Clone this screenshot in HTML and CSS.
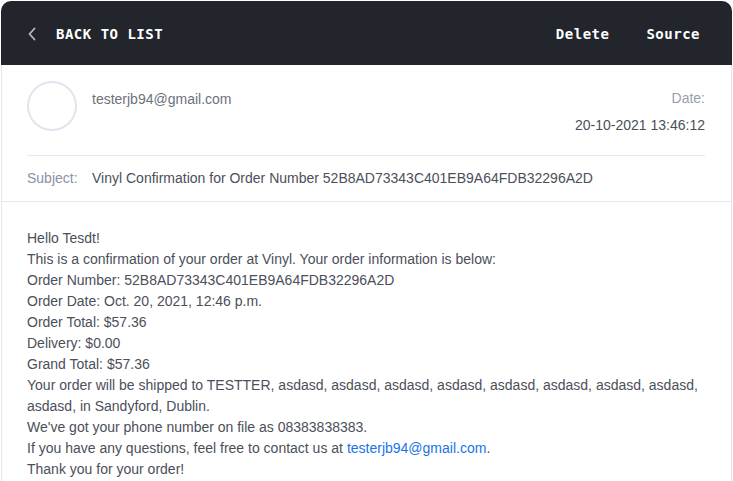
FILE: index.html
```html
<!DOCTYPE html>
<html>
<head>
<meta charset="utf-8">
<link rel="stylesheet" href="styles.css">
</head>
<body>
<div class="card">
  <header class="topbar">
    <a class="back">
      <svg class="chev" width="8" height="14" viewBox="0 0 8 14"><path d="M6.5 1.5 L1.5 7 L6.5 12.5" fill="none" stroke="#b8bcc6" stroke-width="1.8" stroke-linecap="round" stroke-linejoin="round"/></svg>
      <span>BACK TO LIST</span>
    </a>
    <nav class="actions">
      <a>Delete</a>
      <a>Source</a>
    </nav>
  </header>
  <section class="meta">
    <div class="from-row">
      <div class="avatar"></div>
      <div class="from">testerjb94@gmail.com</div>
      <div class="date">
        <div class="date-label">Date:</div>
        <div class="date-value">20-10-2021 13:46:12</div>
      </div>
    </div>
    <div class="subject-row">
      <span class="subject-label">Subject:</span>
      <span class="subject-value">Vinyl Confirmation for Order Number 52B8AD73343C401EB9A64FDB32296A2D</span>
    </div>
  </section>
  <section class="body">
    <p>Hello Tesdt!<br>
    This is a confirmation of your order at Vinyl. Your order information is below:<br>
    Order Number: 52B8AD73343C401EB9A64FDB32296A2D<br>
    Order Date: Oct. 20, 2021, 12:46 p.m.<br>
    Order Total: $57.36<br>
    Delivery: $0.00<br>
    Grand Total: $57.36<br>
    Your order will be shipped to TESTTER, asdasd, asdasd, asdasd, asdasd, asdasd, asdasd, asdasd, asdasd, asdasd, in Sandyford, Dublin.<br>
    We've got your phone number on file as 08383838383.<br>
    If you have any questions, feel free to contact us at <a class="link">testerjb94@gmail.com</a>.<br>
    Thank you for your order!</p>
  </section>
</div>
</body>
</html>
```
FILE: styles.css
```css
html, body {
  margin: 0;
  padding: 0;
  background: #ffffff;
}
body {
  padding: 1px 1px 0 1px;
  font-family: "Liberation Sans", Arial, sans-serif;
  font-size: 14px;
  color: #4b4f5a;
}
.card {
  width: 729px;
  border-left: 1px solid #e6e6f0;
  border-right: 1px solid #e6e6f0;
  border-radius: 10px 10px 0 0;
  min-height: 480px;
}
.topbar {
  height: 64px;
  margin: 0 -1px;
  background: #22252c;
  border-radius: 10px 10px 0 0;
  display: flex;
  align-items: center;
  justify-content: space-between;
  padding: 0 32px 0 27px;
  font-family: "DejaVu Sans Mono", monospace;
  font-weight: bold;
  font-size: 14px;
  letter-spacing: 0.5px;
  color: #ffffff;
}
.back {
  display: flex;
  align-items: center;
  gap: 20px;
  padding-top: 1px;
}
.chev {
  display: block;
}
.actions {
  display: flex;
  gap: 37px;
  padding-top: 1px;
}
.meta {
  padding: 16px 26px 0 25px;
  border-bottom: 1px solid #e8e8ee;
}
.from-row {
  display: flex;
  align-items: flex-start;
  padding-bottom: 19px;
  border-bottom: 1px solid #e8e8ee;
}
.avatar {
  width: 46px;
  height: 46px;
  border: 2px solid #e4e4ee;
  border-radius: 50%;
  flex: none;
}
.from {
  margin-left: 15px;
  margin-top: 8px;
  line-height: 21px;
  color: #6e717c;
  flex: 1;
}
.date {
  text-align: right;
  line-height: 21px;
  margin-top: 7px;
}
.date-label {
  color: #9a9dab;
}
.date-value {
  margin-top: 6px;
  color: #4b4f5a;
}
.subject-row {
  display: flex;
  line-height: 21px;
  padding: 12px 0 12px 0;
}
.subject-label {
  width: 65px;
  flex: none;
  color: #8b90a6;
}
.subject-value {
  color: #4b4f5a;
}
.body {
  padding: 26px 26px 0 25px;
}
.body p {
  margin: 0;
  line-height: 21px;
  color: #4b4f5a;
}
.link {
  color: #1a73e8;
}
```
